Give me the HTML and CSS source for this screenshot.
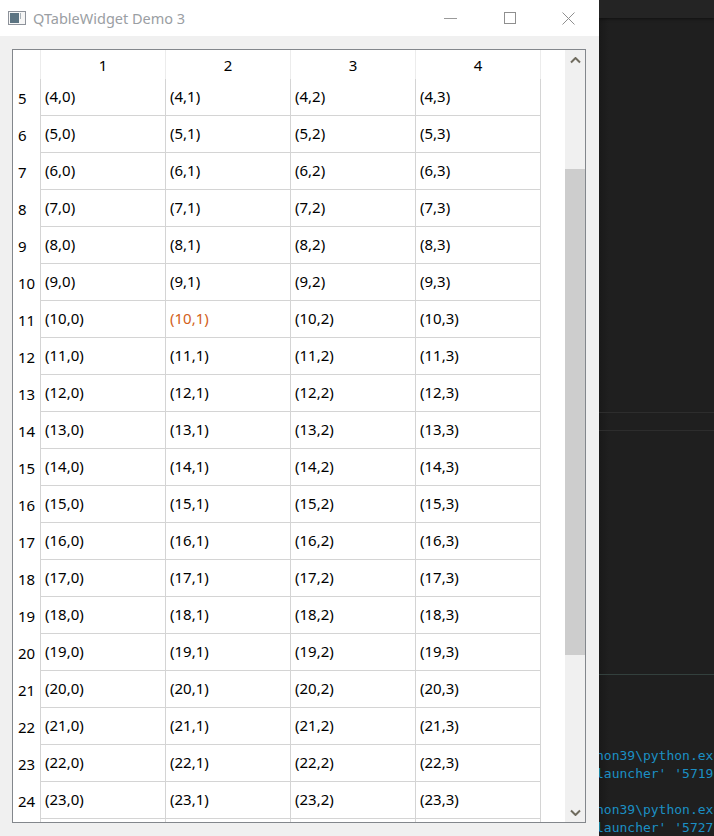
FILE: index.html
```html
<!DOCTYPE html>
<html lang="en">
<head>
<meta charset="utf-8">
<title>QTableWidget Demo 3</title>
<link rel="stylesheet" href="styles.css">
</head>
<body>
<div class="window">
  <div class="titlebar">
    <svg class="appicon" width="18" height="14" viewBox="0 0 18 14"><rect x="0.5" y="0.5" width="17" height="13" fill="#f6f6f6" stroke="#8d929a"/><rect x="2" y="2" width="9" height="10" fill="#5c7482"/><rect x="12" y="2" width="1" height="6" fill="#a9b2b9"/></svg>
    <span class="title">QTableWidget Demo 3</span>
    <div class="controls">
      <svg class="ctl" width="13" height="13" viewBox="0 0 13 13"><path d="M0 6.5H13" stroke="#9a9a9a"/></svg>
      <svg class="ctl" width="13" height="13" viewBox="0 0 13 13"><rect x="1.5" y="0.5" width="11" height="11" fill="none" stroke="#8f8f8f"/></svg>
      <svg class="ctl" width="13" height="13" viewBox="0 0 13 13"><path d="M0.5 0.5L12.5 12.5M12.5 0.5L0.5 12.5" stroke="#8f8f8f"/></svg>
    </div>
  </div>
  <div class="client">
    <div class="frame">
      <div class="table">
        <div class="head"><span class="corner"></span><span class="hcell">1</span><span class="hcell">2</span><span class="hcell">3</span><span class="hcell">4</span></div>
        <div class="row"><span class="num">5</span><span class="cell">(4,0)</span><span class="cell">(4,1)</span><span class="cell">(4,2)</span><span class="cell">(4,3)</span></div>
        <div class="row"><span class="num">6</span><span class="cell">(5,0)</span><span class="cell">(5,1)</span><span class="cell">(5,2)</span><span class="cell">(5,3)</span></div>
        <div class="row"><span class="num">7</span><span class="cell">(6,0)</span><span class="cell">(6,1)</span><span class="cell">(6,2)</span><span class="cell">(6,3)</span></div>
        <div class="row"><span class="num">8</span><span class="cell">(7,0)</span><span class="cell">(7,1)</span><span class="cell">(7,2)</span><span class="cell">(7,3)</span></div>
        <div class="row"><span class="num">9</span><span class="cell">(8,0)</span><span class="cell">(8,1)</span><span class="cell">(8,2)</span><span class="cell">(8,3)</span></div>
        <div class="row"><span class="num">10</span><span class="cell">(9,0)</span><span class="cell">(9,1)</span><span class="cell">(9,2)</span><span class="cell">(9,3)</span></div>
        <div class="row"><span class="num">11</span><span class="cell">(10,0)</span><span class="cell accent">(10,1)</span><span class="cell">(10,2)</span><span class="cell">(10,3)</span></div>
        <div class="row"><span class="num">12</span><span class="cell">(11,0)</span><span class="cell">(11,1)</span><span class="cell">(11,2)</span><span class="cell">(11,3)</span></div>
        <div class="row"><span class="num">13</span><span class="cell">(12,0)</span><span class="cell">(12,1)</span><span class="cell">(12,2)</span><span class="cell">(12,3)</span></div>
        <div class="row"><span class="num">14</span><span class="cell">(13,0)</span><span class="cell">(13,1)</span><span class="cell">(13,2)</span><span class="cell">(13,3)</span></div>
        <div class="row"><span class="num">15</span><span class="cell">(14,0)</span><span class="cell">(14,1)</span><span class="cell">(14,2)</span><span class="cell">(14,3)</span></div>
        <div class="row"><span class="num">16</span><span class="cell">(15,0)</span><span class="cell">(15,1)</span><span class="cell">(15,2)</span><span class="cell">(15,3)</span></div>
        <div class="row"><span class="num">17</span><span class="cell">(16,0)</span><span class="cell">(16,1)</span><span class="cell">(16,2)</span><span class="cell">(16,3)</span></div>
        <div class="row"><span class="num">18</span><span class="cell">(17,0)</span><span class="cell">(17,1)</span><span class="cell">(17,2)</span><span class="cell">(17,3)</span></div>
        <div class="row"><span class="num">19</span><span class="cell">(18,0)</span><span class="cell">(18,1)</span><span class="cell">(18,2)</span><span class="cell">(18,3)</span></div>
        <div class="row"><span class="num">20</span><span class="cell">(19,0)</span><span class="cell">(19,1)</span><span class="cell">(19,2)</span><span class="cell">(19,3)</span></div>
        <div class="row"><span class="num">21</span><span class="cell">(20,0)</span><span class="cell">(20,1)</span><span class="cell">(20,2)</span><span class="cell">(20,3)</span></div>
        <div class="row"><span class="num">22</span><span class="cell">(21,0)</span><span class="cell">(21,1)</span><span class="cell">(21,2)</span><span class="cell">(21,3)</span></div>
        <div class="row"><span class="num">23</span><span class="cell">(22,0)</span><span class="cell">(22,1)</span><span class="cell">(22,2)</span><span class="cell">(22,3)</span></div>
        <div class="row"><span class="num">24</span><span class="cell">(23,0)</span><span class="cell">(23,1)</span><span class="cell">(23,2)</span><span class="cell">(23,3)</span></div>
        <div class="row"><span class="num"></span><span class="cell"></span><span class="cell"></span><span class="cell"></span><span class="cell"></span></div>
      </div>
      <div class="scrollbar">
        <div class="arrow"><svg width="11" height="7" viewBox="0 0 11 7"><path d="M1 5.5L5.5 1L10 5.5" fill="none" stroke="#6f6b5e" stroke-width="2"/></svg></div>
        <div class="track"><div class="thumb"></div></div>
        <div class="arrow"><svg width="11" height="7" viewBox="0 0 11 7"><path d="M1 1.5L5.5 6L10 1.5" fill="none" stroke="#6f6b5e" stroke-width="2"/></svg></div>
      </div>
    </div>
  </div>
</div>
<div class="console">
  <div class="console-top"></div>
  <div class="pane pane-a"></div>
  <div class="pane pane-b"></div>
  <div class="pane pane-c"></div>
  <div class="output">
    <div class="line">non39\python.exe</div>
    <div class="line">launcher' '5719</div>
    <div class="line"></div>
    <div class="line">non39\python.exe</div>
    <div class="line">launcher' '5727</div>
  </div>
</div>
</body>
</html>
```
FILE: styles.css
```css
* { box-sizing: border-box; }
html, body { margin: 0; padding: 0; height: 100%; }
body {
  display: flex;
  width: 714px;
  height: 836px;
  overflow: hidden;
  font-family: "Noto Sans", "Open Sans", sans-serif;
  font-size: 15px;
  color: #000;
  background: #1f1f1f;
}
.window {
  width: 599px;
  flex: none;
  height: 836px;
  display: flex;
  flex-direction: column;
  background: #f0f0f0;
}
.titlebar {
  height: 36px;
  flex: none;
  display: flex;
  align-items: center;
  background: #fff;
  padding-left: 8px;
}
.appicon { flex: none; margin-right: 7px; }
.title { font-size: 14.5px; color: #9a9ea3; }
.controls {
  margin-left: auto;
  display: flex;
  align-items: center;
  gap: 46px;
  padding-right: 24px;
}
.ctl { display: block; }
.client {
  flex: 1;
  padding: 13px 12px;
}
.frame {
  width: 574px;
  height: 774px;
  border: 1px solid #83878c;
  background: #fff;
  display: flex;
}
.table {
  width: 552px;
  height: 772px;
  overflow: hidden;
  flex: none;
}
.head { display: flex; height: 29px; }
.corner { width: 28px; flex: none; border-right: 1px solid #ececec; }
.hcell {
  width: 125px;
  flex: none;
  text-align: center;
  line-height: 30px;
  border-right: 1px solid #ececec;
}
.row { display: flex; height: 37px; }
.num {
  width: 28px;
  flex: none;
  padding-left: 5px;
  line-height: 38px;
  border-right: 1px solid #d4d4d4;
}
.cell {
  width: 125px;
  flex: none;
  padding-left: 4px;
  line-height: 35px;
  border-right: 1px solid #d4d4d4;
  border-bottom: 1px solid #d4d4d4;
}
.accent { color: #d2601a; }
.scrollbar {
  width: 20px;
  flex: none;
  margin-left: auto;
  display: flex;
  flex-direction: column;
  background: #f0f0f0;
}
.arrow {
  height: 20px;
  flex: none;
  display: flex;
  align-items: center;
  justify-content: center;
}
.track { flex: 1; padding-top: 99px; }
.thumb { height: 486px; background: #cdcdcd; }
.console {
  flex: 1;
  position: relative;
  overflow: hidden;
  background: linear-gradient(to right, #191919, #1f1f1f 10px);
}
.console-top {
  height: 18px;
  background: #242424;
  box-shadow: 0 1px 3px rgba(0,0,0,.5);
}
.pane { position: absolute; left: 0; right: 0; height: 1px; background: #2d2d2d; }
.pane-a { top: 412px; }
.pane-b { top: 430px; }
.pane-c { top: 674px; background: #33403d; }
.output {
  position: absolute;
  top: 747px;
  left: -3px;
  font-family: "DejaVu Sans Mono", monospace;
  font-size: 13px;
  line-height: 18px;
  color: #1b8fc4;
}
.line { height: 18px; white-space: pre; }
```
